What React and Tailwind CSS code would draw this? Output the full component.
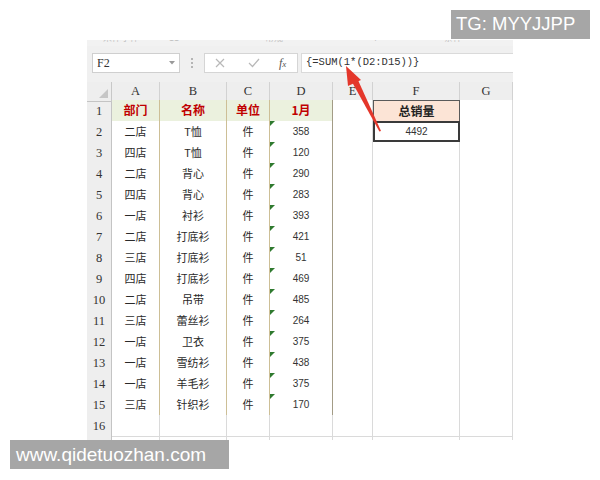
import React from "react";

const data = [
  ["二店", "T恤", "件", "358"],
  ["四店", "T恤", "件", "120"],
  ["二店", "背心", "件", "290"],
  ["四店", "背心", "件", "283"],
  ["一店", "衬衫", "件", "393"],
  ["二店", "打底衫", "件", "421"],
  ["三店", "打底衫", "件", "51"],
  ["四店", "打底衫", "件", "469"],
  ["二店", "吊带", "件", "485"],
  ["三店", "蕾丝衫", "件", "264"],
  ["一店", "卫衣", "件", "375"],
  ["一店", "雪纺衫", "件", "438"],
  ["一店", "羊毛衫", "件", "375"],
  ["三店", "针织衫", "件", "170"],
];

const GRID = "grid grid-cols-[25px_48px_67px_43px_63px_40px_87px_53px]";
const cjk = { fontFamily: '"Noto Sans CJK SC", sans-serif' };
const serif = { fontFamily: '"Liberation Serif", "Noto Sans CJK SC", serif' };

function RowHead({ n }) {
  return (
    <div
      className="flex items-center justify-center bg-[#eeeeee] border-r border-b border-r-[#c4c4c4] border-b-[#d8d8d8] text-[12.5px] text-[#333] pt-[2px]"
      style={serif}
    >
      {n}
    </div>
  );
}

function TCell({ children, last, dcol, head }) {
  const base =
    "relative flex items-center justify-center border-b text-[11px] text-[#2a2a2a] ";
  const br = dcol
    ? "border-r border-r-[#a39c86] "
    : "border-r border-r-[#cdbf96] ";
  const bb = last ? "border-b-[#b5a985] " : "border-b-[#cfc39d] ";
  const bg = head ? "bg-[#ebf1de] " : "bg-white ";
  return <div className={base + br + bb + bg}>{children}</div>;
}

function ECell({ children, cls }) {
  return (
    <div
      className={
        "relative flex items-center justify-center border-r border-b border-r-[#dadada] border-b-[#dadada] " +
        (cls || "bg-white")
      }
    >
      {children}
    </div>
  );
}

function Tri() {
  return (
    <span className="absolute left-0 top-0 w-0 h-0 border-t-[5px] border-t-[#2f7a2f] border-r-[5px] border-r-transparent" />
  );
}

export default function App() {
  return (
    <div className="relative w-[600px] h-[480px] bg-white overflow-hidden">
      <div className="ml-[87px] pt-[40px] w-[426px]">
        {/* top clipped toolbar strip */}
        <div className="h-[6px] bg-[#f2f2f2] overflow-hidden relative">
          <div
            className="flex text-[9px] text-[#c2c2c2] -mt-[7px] leading-[10px]"
            style={cjk}
          >
            <span className="ml-[16px]">宋体字体</span>
            <span className="ml-[30px]">11</span>
            <span className="ml-[86px]">常规</span>
            <span className="ml-[90px]">¥</span>
            <span className="ml-[66px]">条件</span>
          </div>
        </div>
        {/* formula bar */}
        <div className="h-[36px] bg-[#f0f0f0] flex items-center pb-[3px]">
          <div className="ml-[5px] w-[88px] h-[20px] bg-white border border-[#cfcfcf] flex items-center justify-between px-[4px]">
            <span className="text-[12px] text-[#333]" style={serif}>
              F2
            </span>
            <svg width="6" height="4" viewBox="0 0 6 4">
              <path d="M0 0 L6 0 L3 3.5 Z" fill="#999" />
            </svg>
          </div>
          <div className="ml-[11px] flex flex-col gap-[2px]">
            <span className="w-[2px] h-[2px] bg-[#b5b5b5]" />
            <span className="w-[2px] h-[2px] bg-[#b5b5b5]" />
            <span className="w-[2px] h-[2px] bg-[#b5b5b5]" />
          </div>
          <div className="ml-[11px] w-[94px] h-[20px] bg-white border border-[#d5d5d5] flex items-center">
            <svg className="ml-[10px]" width="10" height="10" viewBox="0 0 10 10">
              <path d="M1 1 L9 9 M9 1 L1 9" stroke="#b8b8b8" strokeWidth="1.2" />
            </svg>
            <svg className="ml-[23px]" width="12" height="10" viewBox="0 0 12 10">
              <path d="M1 5 L4.5 8.5 L11 1" stroke="#b8b8b8" strokeWidth="1.2" fill="none" />
            </svg>
            <span
              className="ml-[19px] text-[12px] italic text-[#555]"
              style={serif}
            >
              f<span className="text-[9px]">x</span>
            </span>
          </div>
          <div className="ml-[3px] flex-1 h-[20px] bg-white border-y border-l border-[#dadada] flex items-center pl-[4px]">
            <span
              className="text-[10.5px] text-[#333]"
              style={{ fontFamily: '"Liberation Mono", monospace' }}
            >
              {"{=SUM(1*(D2:D15))}"}
            </span>
          </div>
        </div>
        {/* column headers */}
        <div className={GRID + " h-[18px] bg-[#eeeeee]"}>
          <div className="relative border-r border-b border-r-[#c8c8c8] border-b-[#c4c4c4]">
            <span className="absolute right-[3px] bottom-[3px] w-0 h-0 border-b-[9px] border-b-[#c6c6c6] border-l-[9px] border-l-transparent" />
          </div>
          {["A", "B", "C", "D", "E", "F", "G"].map((l) => (
            <div
              key={l}
              className="flex items-center justify-center border-r border-b border-r-[#d2d2d2] border-b-[#c4c4c4] text-[12.5px] text-[#333]"
              style={serif}
            >
              {l}
            </div>
          ))}
        </div>
        {/* row 1 */}
        <div className={GRID + " h-[21px]"}>
          <RowHead n={1} />
          {["部门", "名称", "单位", "1月"].map((t, i) => (
            <TCell key={t} head dcol={i === 3}>
              <span
                className="text-[12px] font-bold text-[#c00000]"
                style={cjk}
              >
                {t}
              </span>
            </TCell>
          ))}
          <ECell />
          <div className="flex items-center justify-center bg-[#fce4d6] shadow-[inset_0_0_0_1px_#5a5a5a]">
            <span className="text-[12px] font-bold text-[#222]" style={cjk}>
              总销量
            </span>
          </div>
          <ECell />
        </div>
        {/* data rows */}
        {data.map((r, idx) => (
          <div key={idx} className={GRID + " h-[21px]"}>
            <RowHead n={idx + 2} />
            <TCell last={idx === data.length - 1}>
              <span style={cjk}>{r[0]}</span>
            </TCell>
            <TCell last={idx === data.length - 1}>
              <span style={cjk}>{r[1]}</span>
            </TCell>
            <TCell last={idx === data.length - 1}>
              <span style={cjk}>{r[2]}</span>
            </TCell>
            <TCell last={idx === data.length - 1} dcol>
              <Tri />
              <span
                className="text-[10px] text-[#333]"
                style={{ fontFamily: '"Liberation Sans", sans-serif' }}
              >
                {r[3]}
              </span>
            </TCell>
            <ECell />
            {idx === 0 ? (
              <div className="flex items-center justify-center bg-white shadow-[inset_0_0_0_2px_#3a3a3a] border-b border-b-[#dadada]">
                <span
                  className="text-[10px] text-[#333]"
                  style={{ fontFamily: '"Liberation Sans", sans-serif' }}
                >
                  4492
                </span>
              </div>
            ) : (
              <ECell />
            )}
            <ECell />
          </div>
        ))}
        {/* row 16 */}
        <div className={GRID + " h-[21px]"}>
          <RowHead n={16} />
          {[0, 1, 2, 3, 4, 5, 6].map((i) => (
            <ECell key={i} />
          ))}
        </div>
        {/* partial row 17 */}
        <div className={GRID + " h-[4px]"}>
          <div className="bg-[#eeeeee] border-r border-r-[#c4c4c4]" />
          {[0, 1, 2, 3, 4, 5, 6].map((i) => (
            <div key={i} className="border-r border-r-[#dadada]" />
          ))}
        </div>
      </div>

      {/* red arrow */}
      <svg
        className="absolute left-0 top-0 pointer-events-none"
        width="600"
        height="480"
        viewBox="0 0 600 480"
      >
        <polygon points="346,66 361,80 348,86" fill="#e4372b" />
        <polygon points="352,82 357.5,79 381,131 379.4,131.6" fill="#e4372b" />
      </svg>

      {/* watermarks */}
      <div className="absolute left-[451px] top-[10px] w-[139px] h-[29px] bg-[#a6a6a6] flex items-center pl-[5px]">
        <span
          className="text-[18.5px] text-white leading-none"
          style={{ fontFamily: '"Liberation Sans", sans-serif' }}
        >
          TG: MYYJJPP
        </span>
      </div>
      <div className="absolute left-[10px] top-[440px] w-[219px] h-[29px] bg-[#a6a6a6] flex items-center pl-[6px]">
        <span
          className="text-[19px] text-white leading-none"
          style={{ fontFamily: '"Liberation Sans", sans-serif' }}
        >
          www.qidetuozhan.com
        </span>
      </div>
    </div>
  );
}
